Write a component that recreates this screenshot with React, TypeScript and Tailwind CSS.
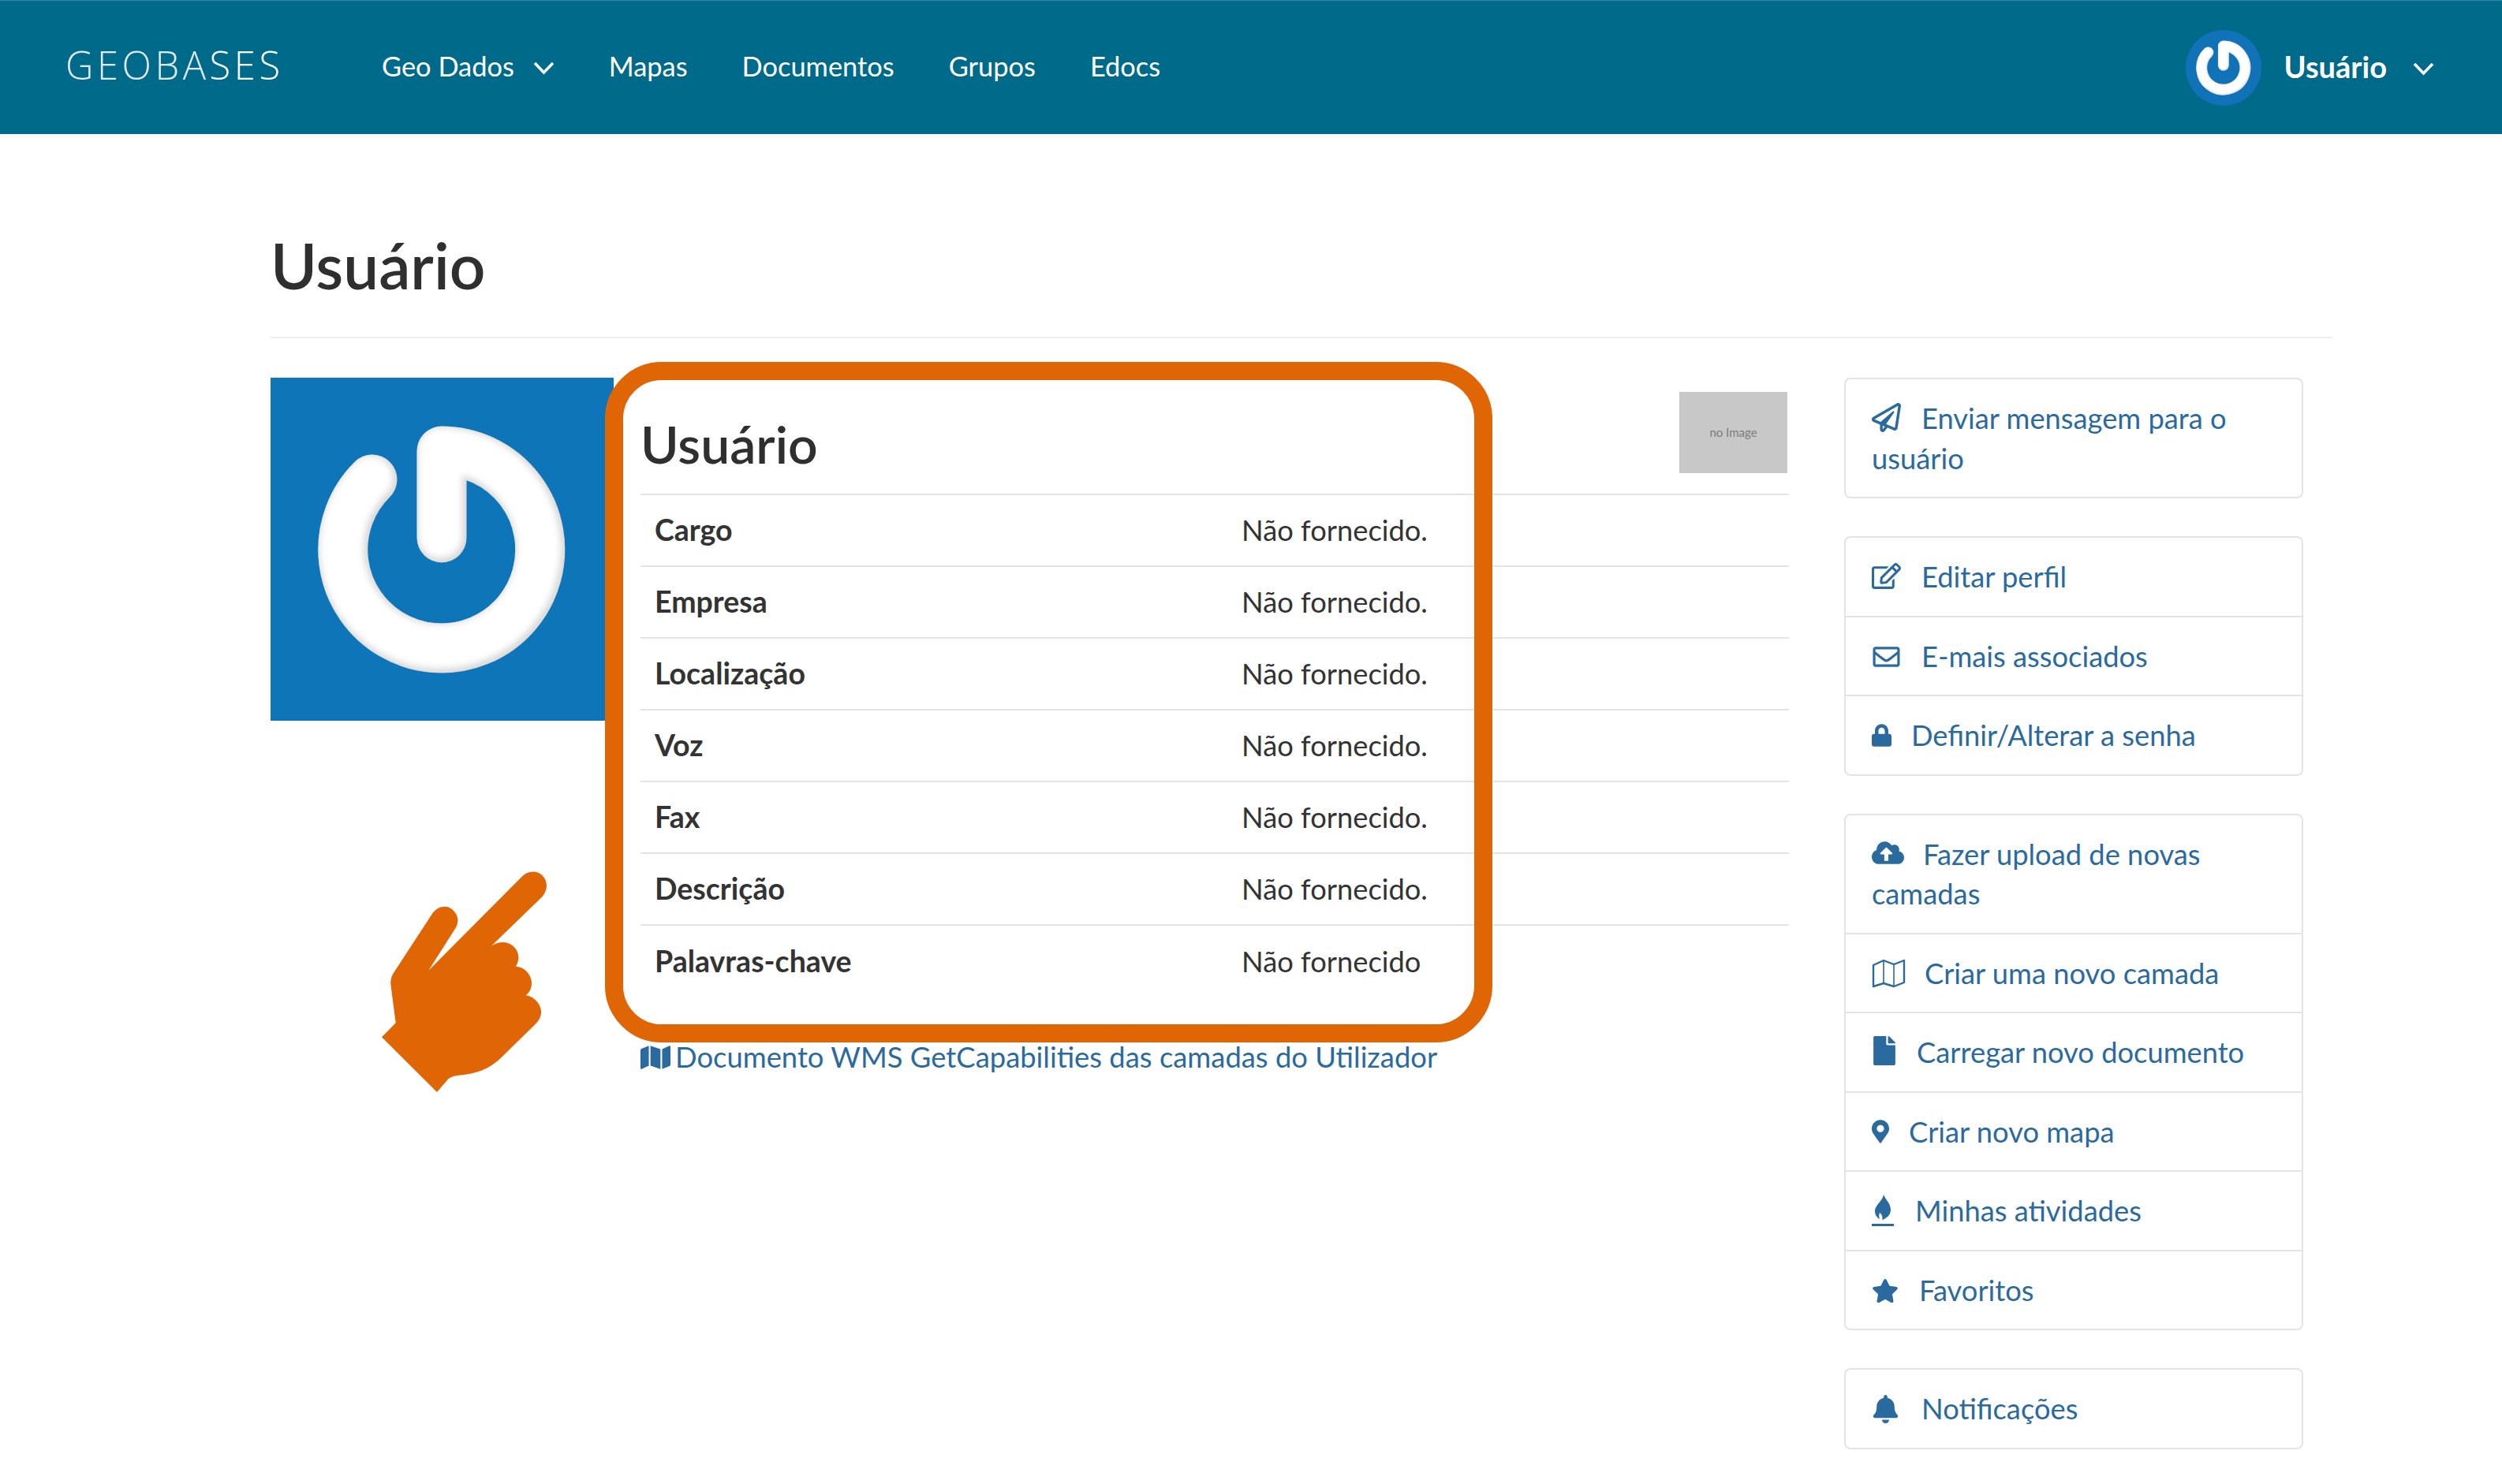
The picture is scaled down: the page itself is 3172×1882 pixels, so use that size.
import type { ReactNode } from 'react'
import {
  FaBell,
  FaCloudUploadAlt,
  FaFile,
  FaLock,
  FaMap,
  FaMapMarkerAlt,
  FaRegEdit,
  FaRegEnvelope,
  FaRegPaperPlane,
  FaStar,
} from 'react-icons/fa'

type SideItem = { label: string; icon: ReactNode; slot: string }

function Flame() {
  return (
    <svg viewBox="0 0 28 40" className="w-[28px] h-[40px] fill-current align-[-6px] inline-block">
      <path d="M15 0 C17 6 24 11 24 19 C24 26 19 30 13 32 C14 28 13 25 10 23 C9 26 9 28 10 31 C6 29 4 25 4 21 C4 13 14 8 15 0 Z" />
      <rect x="0" y="37" width="28" height="3" />
    </svg>
  )
}

function MapOutline() {
  return (
    <svg viewBox="0 0 43 37" className="w-[43px] h-[37px] inline-block align-[-5px]" fill="none" stroke="currentColor" strokeWidth="2.4" strokeLinejoin="round">
      <path d="M2 8 L15 2 L28 7 L41 2 V30 L28 35 L15 31 L2 35 Z" />
      <path d="M15 2 V31 M28 7 V35" strokeWidth="1.6" />
    </svg>
  )
}

const groups: SideItem[][] = [
  [{ label: 'Enviar mensagem para o usuário', slot: 'w-[63px]', icon: <FaRegPaperPlane className="w-[37px] h-[37px] inline-block align-[-4px]" /> }],
  [
    { label: 'Editar perfil', slot: 'w-[63px]', icon: <FaRegEdit className="w-[37px] h-[33px] inline-block align-[-2px]" /> },
    { label: 'E-mais associados', slot: 'w-[63px]', icon: <FaRegEnvelope className="w-[37px] h-[34px] inline-block align-[-4px]" /> },
    { label: 'Definir/Alterar a senha', slot: 'w-[50px]', icon: <FaLock className="w-[25px] h-[29px] inline-block align-[-1px]" /> },
  ],
  [
    { label: 'Fazer upload de novas camadas', slot: 'w-[65px]', icon: <FaCloudUploadAlt className="w-[41px] h-[33px] inline-block align-[-1px]" /> },
    { label: 'Criar uma novo camada', slot: 'w-[67px]', icon: <MapOutline /> },
    { label: 'Carregar novo documento', slot: 'w-[57px]', icon: <FaFile className="w-[32px] h-[37px] inline-block align-[-3px]" /> },
    { label: 'Criar novo mapa', slot: 'w-[47px]', icon: <FaMapMarkerAlt className="w-[22px] h-[34px] inline-block align-[-3px]" /> },
    { label: 'Minhas atividades', slot: 'w-[55px]', icon: <Flame /> },
    { label: 'Favoritos', slot: 'w-[60px]', icon: <FaStar className="w-[34px] h-[32px] inline-block align-[-3px]" /> },
  ],
  [{ label: 'Notificações', slot: 'w-[63px]', icon: <FaBell className="w-[35px] h-[36px] inline-block align-[-5px]" /> }],
]

const rows = [
  ['Cargo', 'Não fornecido.'],
  ['Empresa', 'Não fornecido.'],
  ['Localização', 'Não fornecido.'],
  ['Voz', 'Não fornecido.'],
  ['Fax', 'Não fornecido.'],
  ['Descrição', 'Não fornecido.'],
  ['Palavras-chave', 'Não fornecido'],
]

function PowerMark({ className }: { className: string }) {
  const d = 'M129 129 A125 125 0 1 0 217 93 L217 203'
  return (
    <svg viewBox="0 0 435 435" className={className}>
      <defs>
        <filter id="soft" x="-20%" y="-20%" width="140%" height="140%">
          <feGaussianBlur stdDeviation="4" />
        </filter>
        <mask id="ring" maskUnits="userSpaceOnUse" x="0" y="0" width="435" height="435">
          <path d={d} fill="none" stroke="#fff" strokeWidth="63" strokeLinecap="round" strokeLinejoin="round" />
        </mask>
      </defs>
      <path d={d} fill="none" stroke="#d8d8d8" strokeWidth="63" strokeLinecap="round" strokeLinejoin="round" />
      <g mask="url(#ring)">
        <path d={d} transform="translate(-2 -2)" fill="none" stroke="#fff" strokeWidth="56" strokeLinecap="round" strokeLinejoin="round" filter="url(#soft)" />
      </g>
    </svg>
  )
}

function Chevron({ className }: { className: string }) {
  return (
    <svg viewBox="0 0 27 18" className={className} fill="none" stroke="currentColor" strokeWidth="3.5">
      <path d="M2 3 L13.5 15 L25 3" />
    </svg>
  )
}

export default function App() {
  return (
    <div className="relative w-[3172px] h-[1882px] overflow-hidden bg-white text-[#333] font-['Lato','Open_Sans',sans-serif]">
      {/* NAVBAR */}
      <header className="flex items-center h-[170px] bg-[#006a8a] border-t border-[#3a859e] text-white">
        <div className="ml-[83px] w-[401px] font-['Open_Sans',sans-serif] font-light text-[49px] leading-none tracking-[4.5px] text-[#e3e9eb] -mt-[6px]">
          GEOBA<span className="text-white">SES</span>
        </div>
        <nav className="flex items-center gap-[69px] text-[34.4px] leading-none -mt-[3px]">
          <span className="flex items-center gap-[24px]">
            Geo Dados <Chevron className="w-[27px] h-[18px] mt-[4px]" />
          </span>
          <span>Mapas</span>
          <span>Documentos</span>
          <span>Grupos</span>
          <span>Edocs</span>
        </nav>
        <div className="ml-auto mr-[86px] flex items-center">
          <div className="w-[96px] h-[96px] rounded-full bg-[#1272b8] flex items-center justify-center overflow-hidden">
            <PowerMark className="w-[96px] h-[96px]" />
          </div>
          <span className="ml-[29px] text-[38px] font-bold leading-none -mt-[3px]">Usuário</span>
          <Chevron className="ml-[33px] w-[27px] h-[18px] mt-[2px]" />
        </div>
      </header>

      <main className="pl-[343px] pr-[215px]">
        {/* TITLE */}
        <h1 className="pt-[126px] text-[80px] leading-[80px] font-semibold text-[#2f2f2f]">Usuário</h1>
        <hr className="mt-[51px] border-t-2 border-[#eeeeee]" />

        <div className="flex mt-[50px]">
          <div className="w-[435px] h-[435px] bg-[#0e75b8] shrink-0">
            <PowerMark className="w-[435px] h-[435px]" />
          </div>

          {/* PROFILE TABLE */}
          <section className="ml-[34px] w-[1456px] shrink-0">
            <div className="flex justify-between items-start h-[149px] border-b-2 border-[#e4e4e4]">
              <h2 className="mt-[51px] text-[66px] leading-[66px] font-semibold text-[#2f2f2f]">Usuário</h2>
              <div className="mt-[18px] mr-[2px] w-[137px] h-[103px] bg-[#c8c8c8] flex items-center justify-center text-[15px] text-[#7d7d7d]">
                no Image
              </div>
            </div>
            {rows.map(([label, value], i) => (
              <div
                key={label}
                className={i < rows.length - 1 ? 'flex items-center h-[91px] border-b-2 border-[#e4e4e4] text-[36.3px]' : 'flex items-center h-[91px] text-[36.3px]'}
              >
                <span className="w-[762px] pl-[18px] font-bold text-[37.5px]">{label}</span>
                <span>{value}</span>
              </div>
            ))}
            <a className="mt-[50px] flex items-center h-[51px] text-[36.4px] text-[#2b6a9f]">
              <FaMap className="w-[38px] h-[36px] mr-[6px]" />
              Documento WMS GetCapabilities das camadas do Utilizador
            </a>
          </section>

          {/* SIDEBAR */}
          <aside className="ml-[70px] w-[582px] shrink-0 flex flex-col gap-[48px]">
            {groups.map((group, g) => (
              <ul key={g} className="border-2 border-[#e4e4e4] rounded-[8px] divide-y-2 divide-[#e4e4e4]">
                {group.map(item => (
                  <li key={item.label} className="px-[33px] py-[24px] text-[36.3px] leading-[50.5px] text-[#2b6a9f]">
                    <span className={`inline-block ${item.slot}`}>{item.icon}</span>
                    {item.label}
                  </li>
                ))}
              </ul>
            ))}
          </aside>
        </div>
      </main>

      {/* ANNOTATION */}
      <div className="absolute left-[767px] top-[459px] w-[1125px] h-[863px] rounded-[72px] border-[23px] border-[#e06505]" />
      <svg viewBox="0 0 1500 1080" className="absolute left-[440px] top-[1060px] w-[500px] h-[360px] fill-[#e06505]">
        <path d="M132 766 L185 712 L166 565 Q164 540 178 520 L325 295 C345 265 385 260 405 285 C425 305 425 330 412 352 L310 512 L665 155 C690 130 730 130 750 160 C765 185 760 210 742 232 L548 420 C575 400 610 400 632 420 C655 440 658 470 642 497 C670 498 695 520 701 550 C705 575 695 595 680 607 C705 610 730 630 737 660 C742 680 732 700 718 715 L590 840 C550 880 510 900 450 908 C420 912 400 912 385 925 L342 975 Z" />
      </svg>
    </div>
  )
}
